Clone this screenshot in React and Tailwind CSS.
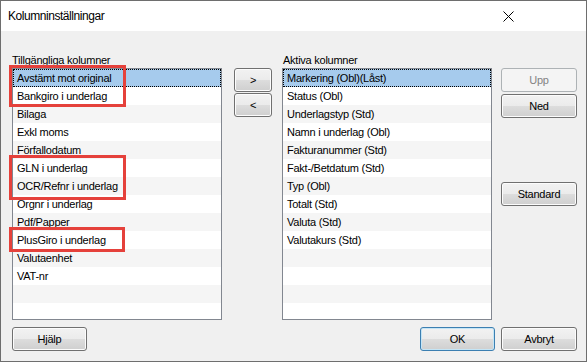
import React from 'react';

const available = [
  'Avstämt mot original',
  'Bankgiro i underlag',
  'Bilaga',
  'Exkl moms',
  'Förfallodatum',
  'GLN i underlag',
  'OCR/Refnr i underlag',
  'Orgnr i underlag',
  'Pdf/Papper',
  'PlusGiro i underlag',
  'Valutaenhet',
  'VAT-nr',
];

const active = [
  'Markering (Obl)(Låst)',
  'Status (Obl)',
  'Underlagstyp (Std)',
  'Namn i underlag (Obl)',
  'Fakturanummer (Std)',
  'Fakt-/Betdatum (Std)',
  'Typ (Obl)',
  'Totalt (Std)',
  'Valuta (Std)',
  'Valutakurs (Std)',
];

const TOTAL_ROWS = 14;

function ListBox({ items }) {
  const rows = Array.from({ length: TOTAL_ROWS }, (_, i) => items[i] ?? '');
  return (
    <div className="h-[252px] w-[210px] overflow-hidden border border-[#828790] bg-white">
      {rows.map((text, i) => (
        <div
          key={i}
          className={
            i === 0
              ? 'h-[18px] border border-dotted border-black bg-[#a6cbed] pl-[3px] leading-[16px]'
              : i % 2 === 0
                ? 'h-[18px] bg-[#f5f5f5] pl-[4px] leading-[18px]'
                : 'h-[18px] bg-white pl-[4px] leading-[18px]'
          }
        >
          {text}
        </div>
      ))}
    </div>
  );
}

function Button({ children, className = '', disabled, isDefault }) {
  let look =
    'border-[#707070] bg-[linear-gradient(#f2f2f2_0%,#ebebeb_50%,#dddddd_50%,#cfcfcf_100%)] shadow-[inset_0_0_0_1px_#fcfcfc] text-black';
  if (disabled) look = 'border-[#adb2b5] bg-[#f4f4f4] text-[#838383]';
  if (isDefault)
    look =
      'border-[#3c7fb1] bg-[linear-gradient(#f2f2f2_0%,#ebebeb_50%,#dddddd_50%,#cfcfcf_100%)] shadow-[inset_0_0_0_1px_#c4e5f6] text-black';
  return (
    <div
      className={`flex h-[24px] items-center justify-center rounded-[3px] border ${look} ${className}`}
    >
      {children}
    </div>
  );
}

export default function App() {
  return (
    <div
      className="relative flex h-[362px] w-[587px] flex-col border border-[#6e6e6e] bg-[#f0f0f0] text-[11px] tracking-[-0.25px] text-black"
      style={{ fontFamily: '"Liberation Sans", Arial, sans-serif' }}
    >
      <div className="flex h-[30px] items-center justify-between bg-white pl-[7px] pr-[72px]">
        <span className="text-[12px] tracking-[-0.45px]">Kolumninställningar</span>
        <svg width="11" height="11" viewBox="0 0 11 11">
          <path d="M0.5 0.5 L10.5 10.5 M10.5 0.5 L0.5 10.5" stroke="#000" strokeWidth="1" />
        </svg>
      </div>

      <div className="flex flex-col pl-[11px] pr-[9px] pt-[21px]">
        <div className="flex">
          <div className="flex flex-col">
            <div className="h-[16px] leading-[16px]">Tillgängliga kolumner</div>
            <ListBox items={available} />
          </div>

          <div className="ml-[12px] mt-[16px] flex w-[38px] flex-col gap-[1px]">
            <Button>&gt;</Button>
            <Button>&lt;</Button>
          </div>

          <div className="ml-[10px] flex flex-col">
            <div className="h-[16px] pl-[1px] leading-[16px]">Aktiva kolumner</div>
            <ListBox items={active} />
          </div>

          <div className="ml-[9px] mt-[16px] flex w-[76px] flex-col">
            <Button disabled>Upp</Button>
            <Button className="mt-[2px]">Ned</Button>
            <Button className="mt-[64px]">Standard</Button>
          </div>
        </div>

        <div className="mt-[7px] flex">
          <Button className="w-[75px]">Hjälp</Button>
          <Button isDefault className="ml-auto w-[75px]">OK</Button>
          <Button className="ml-[6px] w-[76px]">Avbryt</Button>
        </div>
      </div>

      <div className="absolute left-[8px] top-[64px] h-[42px] w-[117px] border-[3px] border-[#e5413b]" />
      <div className="absolute left-[8px] top-[154px] h-[45px] w-[117px] border-[3px] border-[#e5413b]" />
      <div className="absolute left-[8px] top-[226px] h-[25px] w-[116px] border-[3px] border-[#e5413b]" />
    </div>
  );
}
